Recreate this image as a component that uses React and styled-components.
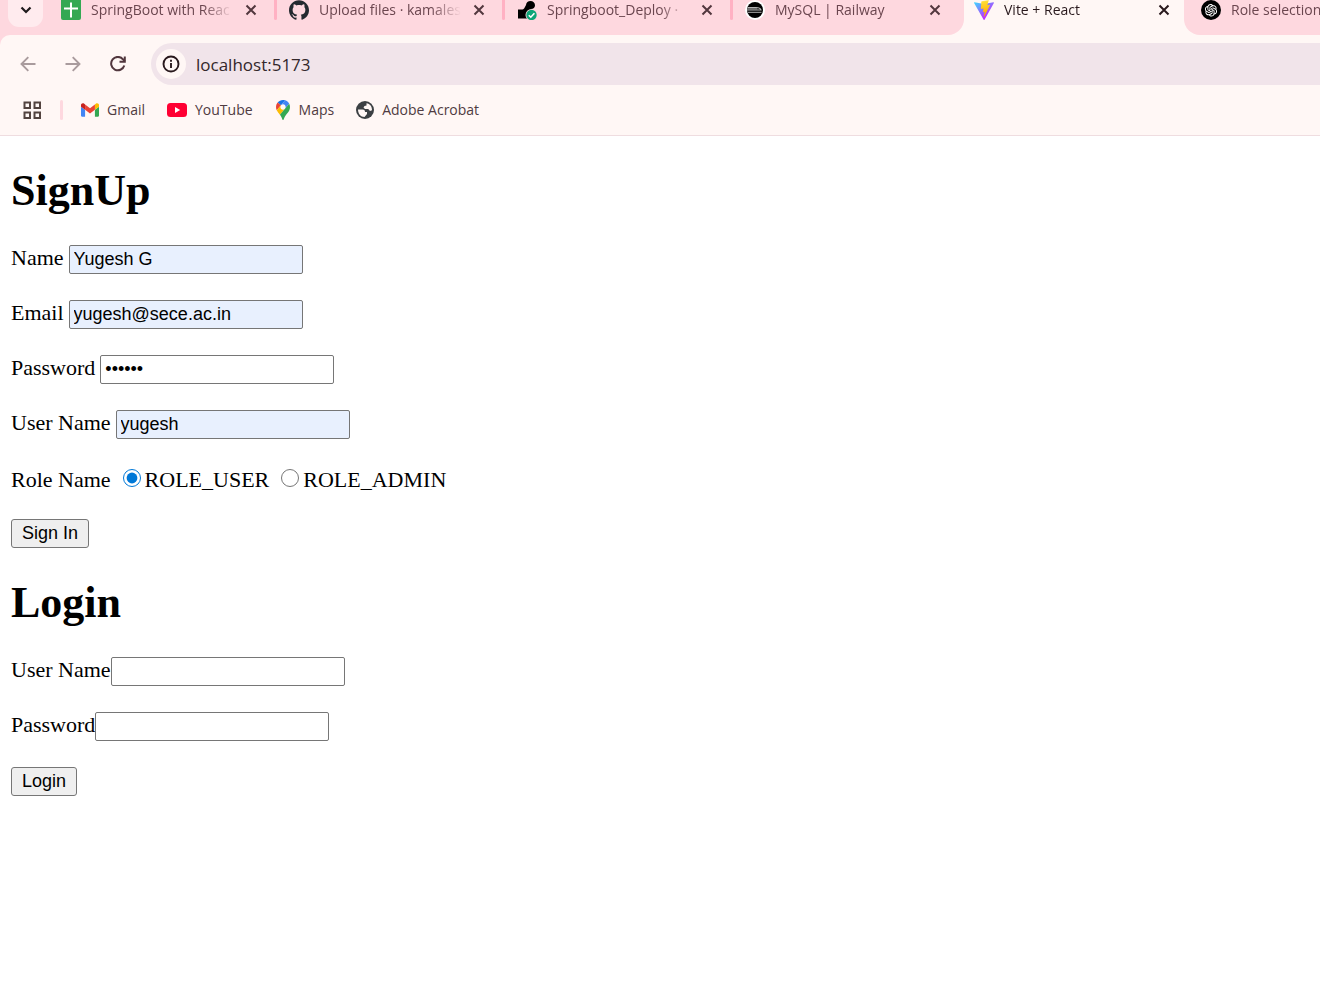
import React, { useState } from "react";
import styled, { createGlobalStyle } from "styled-components";
import { SiGithub } from "react-icons/si";
import { AiOutlineOpenAI } from "react-icons/ai";

const GlobalStyle = createGlobalStyle`
  * { box-sizing: border-box; }
  body { margin: 0; background: #fff; color: #000; }
  button, input { font: inherit; color: inherit; }
`;

const Browser = styled.header`
  font-family: "Open Sans", "Noto Sans", sans-serif;
  font-size: 14px;
  line-height: 20px;
  background: #fed8df;
  overflow: hidden;
`;

const TabStrip = styled.div`
  display: flex;
  height: 35px;
  background: #fff7f5;
`;

const TabGroup = styled.div`
  display: flex;
  flex: ${(p) => (p.$fill ? "1 1 0" : "none")};
  min-width: 0;
  overflow: hidden;
  padding: ${(p) => (p.$fill ? "0 0 0 7px" : "0 1px 0 8px")};
  background: #fed8df;
  border-radius: ${(p) => (p.$fill ? "0 0 0 16px" : "0 0 16px 0")};
`;

const TabSearch = styled.button`
  display: flex;
  align-items: center;
  justify-content: center;
  width: 35px;
  height: 27px;
  margin-right: 8px;
  padding: 0 0 7px;
  border: 0;
  border-radius: 0 0 11px 11px;
  background: #ffebee;
  color: #1f1a1c;
`;

const Tab = styled.div`
  display: flex;
  flex: none;
  height: 20px;
  width: ${(p) => (p.$active ? 220 : 228)}px;
  padding-left: 10px;
  color: ${(p) => (p.$active ? "#29191d" : "#6b464f")};
`;

const Favicon = styled.span`
  display: flex;
  flex: none;
  align-items: center;
  justify-content: center;
  width: 20px;
  height: 20px;
  border-radius: 10px;
  background: ${(p) => p.$fill || "none"};
  color: ${(p) => p.$ink || "inherit"};
`;

const TabTitle = styled.span`
  width: 142px;
  margin-left: 10px;
  overflow: hidden;
  white-space: nowrap;
  mask-image: linear-gradient(to right, #000 112px, transparent 142px);
`;

const CloseButton = styled.button`
  display: flex;
  align-items: center;
  justify-content: center;
  width: 16px;
  height: 20px;
  margin-left: 10px;
  padding: 0;
  border: 0;
  background: none;
  color: ${(p) => (p.$active ? "#29191d" : "#52373e")};
`;

const TabDivider = styled.span`
  width: 3px;
  height: 20px;
  margin-left: 15px;
  border-radius: 0 0 2px 2px;
  background: #ffb1c3;
`;

const Toolbar = styled.div`
  display: flex;
  align-items: center;
  padding: 8px 0 0 16px;
  background: #fff7f5;
  border-radius: 10px 0 0 0;
`;

const NavButton = styled.button`
  display: flex;
  align-items: center;
  justify-content: center;
  width: 24px;
  height: 24px;
  margin-right: 21px;
  padding: 0;
  border: 0;
  background: none;
  color: ${(p) => (p.disabled ? "#a99b9d" : "#52373e")};
`;

const AddressBar = styled.div`
  display: flex;
  flex: 1;
  align-items: center;
  height: 42px;
  padding-left: 5px;
  border-radius: 21px 0 0 21px;
  background: #f1e4ea;
`;

const SiteInfo = styled.button`
  display: flex;
  align-items: center;
  justify-content: center;
  width: 30px;
  height: 30px;
  padding: 0;
  border: 0;
  border-radius: 15px;
  background: #fff7f5;
  color: #29191d;
`;

const AddressInput = styled.input`
  flex: 1;
  min-width: 0;
  height: 30px;
  margin-left: 10px;
  padding: 0;
  border: 0;
  outline: none;
  background: none;
  color: #33272b;
  font-size: 17px;
`;

const Bookmarks = styled.nav`
  display: flex;
  align-items: center;
  height: 51px;
  padding-left: 22px;
  background: #fff7f5;
  border-bottom: 1px solid #efdde0;
`;

const AppsButton = styled.button`
  display: flex;
  width: 20px;
  height: 20px;
  padding: 0;
  border: 0;
  background: none;
  color: #52433f;
`;

const BookmarkDivider = styled.span`
  width: 3px;
  height: 20px;
  margin: 0 18px;
  border-radius: 2px;
  background: #fed8df;
`;

const Bookmark = styled.a`
  display: flex;
  align-items: center;
  gap: 8px;
  margin-right: 22px;
  color: #4f3b41;
  text-decoration: none;
  white-space: nowrap;
`;

const Page = styled.main`
  padding: 30px 11px;
  font-family: "Liberation Serif", "Times New Roman", serif;
  font-size: 22px;
  line-height: 25px;
`;

const Title = styled.h1`
  margin: 0 0 29px;
  font-size: 44px;
  line-height: 50px;
`;

const Form = styled.form`
  display: flex;
  flex-direction: column;
  align-items: flex-start;
  gap: 26px;
  margin-bottom: 30px;
`;

const Field = styled.div`
  display: flex;
  align-items: baseline;
  gap: ${(p) => (p.$tight ? 0 : 5)}px;
  height: 29px;
`;

const TextInput = styled.input`
  width: 234px;
  height: 29px;
  padding: 0 4px;
  border: 1px solid #767676;
  border-radius: 2px;
  background: ${(p) => (p.$filled ? "#e8f0fe" : "#fff")};
  font-family: "Liberation Sans", Arial, sans-serif;
  font-size: 18px;
`;

const RoleGroup = styled.div`
  display: flex;
  align-items: center;
  gap: 12px;
  height: 28px;
`;

const RoleOption = styled.label`
  display: flex;
  align-items: center;
  gap: 4px;
`;

const Radio = styled.input`
  width: 18px;
  height: 18px;
  margin: 0 0 2px;
  accent-color: #0078d7;
`;

const SubmitButton = styled.button`
  height: 29px;
  padding: 0 10px;
  border: 1px solid #767676;
  border-radius: 3px;
  background: #efefef;
  font-family: "Liberation Sans", Arial, sans-serif;
  font-size: 18px;
`;

const SheetIcon = () => (
  <svg width="20" height="20" viewBox="0 0 20 20">
    <path d="M0 0h20v18a2 2 0 0 1-2 2H2a2 2 0 0 1-2-2z" fill="#34a853" />
    <path d="M9 2.500h2v5h6v2h-6v8H9v-8H3v-2h6z" fill="#fff" />
  </svg>
);

const DeployIcon = () => (
  <svg width="20" height="20" viewBox="0 0 20 20">
    <path d="M1 9.500h3.500c3 0 3-2 4.500-4.500C9.300 2.500 11 1 13.500 1S18 3 18 5.200 16.500 9 14 9v9.500H1z" fill="#000" />
    <circle cx="14.500" cy="15" r="6" fill="#fed8df" />
    <circle cx="14.500" cy="15" r="5.200" fill="#0ca678" />
    <path d="m11.800 15.200 2 2 3.600-4" fill="none" stroke="#fff" strokeWidth="1.600" />
  </svg>
);

const RailwayIcon = () => (
  <svg width="20" height="20" viewBox="0 0 20 20">
    <circle cx="10" cy="10" r="8" fill="#000" />
    <path d="M2.500 7.500H11c3 0 4.500 1 5 2.500H2" fill="none" stroke="#b5b5b5" strokeWidth="1.100" />
    <path d="M2.300 8.800h10M3 12.300h13.500" stroke="#8c8c8c" strokeWidth="1.300" />
  </svg>
);

const GlobeIcon = () => (
  <svg width="18" height="18" viewBox="0 0 18 18">
    <circle cx="9" cy="9" r="9" fill="#3c4043" />
    <path d="M2 8.500h4.500c2 0 2.500 1 2.500 2.500h2v2l-2.500 3C4.500 16 2 12.500 2 8.500z" fill="#fff7f5" />
    <path d="M10.500 2.200c3.500.500 5.700 3.300 5.500 7l-2 .800-1.800-2H9L7.500 6.500 8.500 5l2-.500z" fill="#fff7f5" />
  </svg>
);

const ViteIcon = () => (
  <svg width="20" height="20" viewBox="0 0 256 257">
    <defs>
      <linearGradient id="viteBody" x1="-.8%" x2="57.6%" y1="7.7%" y2="78.400%">
        <stop offset="0%" stopColor="#41d1ff" />
        <stop offset="100%" stopColor="#bd34fe" />
      </linearGradient>
      <linearGradient id="viteBolt" x1="43.400%" x2="50.300%" y1="2.200%" y2="89%">
        <stop offset="0%" stopColor="#ffea83" />
        <stop offset="8.300%" stopColor="#ffdd35" />
        <stop offset="100%" stopColor="#ffa800" />
      </linearGradient>
    </defs>
    <path fill="url(#viteBody)" d="M255.153 37.938 134.897 252.976c-2.483 4.440-8.862 4.466-11.382.048L.875 37.958c-2.746-4.814 1.371-10.646 6.827-9.670l120.385 21.517a6.537 6.537 0 0 0 2.322-.004l117.867-21.483c5.438-.991 9.574 4.796 6.877 9.620z" />
    <path fill="url(#viteBolt)" d="M185.432.063 96.440 17.501a3.268 3.268 0 0 0-2.634 3.014l-5.474 92.456a3.268 3.268 0 0 0 3.997 3.378l24.777-5.718c2.318-.535 4.413 1.507 3.936 3.838l-7.361 36.047c-.495 2.426 1.782 4.500 4.151 3.780l15.304-4.649c2.372-.720 4.652 1.360 4.150 3.788l-11.698 56.621c-.732 3.542 3.979 5.473 5.943 2.437l1.313-2.028 72.516-144.720c1.215-2.423-.880-5.186-3.540-4.672l-25.505 4.922c-2.396.462-4.435-1.770-3.759-4.114l16.646-57.705c.677-2.350-1.370-4.583-3.769-4.113z" />
  </svg>
);

const ChevronIcon = () => (
  <svg width="12" height="8" viewBox="0 0 12 8">
    <path d="m1.500 1.500 4.500 4.500 4.500-4.500" fill="none" stroke="currentColor" strokeWidth="2.200" />
  </svg>
);

const CloseIcon = () => (
  <svg width="12" height="12" viewBox="0 0 12 12">
    <path d="m1.500 1.500 9 9m0-9-9 9" stroke="currentColor" strokeWidth="2" />
  </svg>
);

const ArrowIcon = ({ forward }) => (
  <svg width="16" height="16" viewBox="0 0 16 16" fill="none" stroke="currentColor" strokeWidth="1.900">
    <path d={forward ? "M.500 8H14.500M7.700 1.200 14.500 8l-6.800 6.800" : "M15.500 8H1.500M8.300 1.200 1.500 8l6.800 6.800"} />
  </svg>
);

const ReloadIcon = () => (
  <svg width="16" height="16" viewBox="0 0 16 16" fill="none" stroke="currentColor" strokeWidth="2">
    <path d="M14.300 9.500A6.700 6.700 0 1 1 13 3.300L14.800 5.200" />
    <path d="M14.800.500v5.200H9.500" />
  </svg>
);

const InfoIcon = () => (
  <svg width="18" height="18" viewBox="0 0 18 18">
    <circle cx="9" cy="9" r="7.500" fill="none" stroke="currentColor" strokeWidth="1.900" />
    <path d="M9 8v5M9 4.800v2" stroke="currentColor" strokeWidth="1.900" />
  </svg>
);

const AppsIcon = () => (
  <svg width="20" height="20" viewBox="0 0 20 20" fill="none" stroke="currentColor" strokeWidth="2">
    <path d="M2.500 2.500h5.500v5.500H2.500zM12.500 2.500H18v5.500h-5.500zM2.500 12.500h5.500V18H2.500zM12.500 12.500H18V18h-5.500z" />
  </svg>
);

const GmailIcon = () => (
  <svg width="18" height="14" viewBox="52 42 88 66">
    <path fill="#4285f4" d="M58 108h14V74L52 59v43c0 3.320 2.690 6 6 6" />
    <path fill="#34a853" d="M120 108h14c3.320 0 6-2.690 6-6V59l-20 15" />
    <path fill="#fbbc04" d="M120 48v26l20-15v-8c0-7.420-8.470-11.650-14.400-7.200" />
    <path fill="#ea4335" d="M72 74V48l24 18 24-18v26L96 92" />
    <path fill="#c5221f" d="M52 51v8l20 15V48l-5.600-4.200c-5.940-4.450-14.400-.220-14.400 7.200" />
  </svg>
);

const YouTubeIcon = () => (
  <svg width="20" height="14" viewBox="0 0 20 14">
    <rect width="20" height="14" rx="3.500" fill="#ff0033" />
    <path d="M8 4v6l5.200-3z" fill="#fff" />
  </svg>
);

const MapsIcon = () => (
  <svg width="16" height="20" viewBox="0 0 92.300 132.300">
    <path fill="#1a73e8" d="M60.200 2.200C55.800.800 51 0 46.100 0 32 0 19.300 6.400 10.800 16.500l21.800 18.300z" />
    <path fill="#ea4335" d="M10.800 16.500C4.100 24.500 0 34.900 0 46.100c0 8.700 1.700 15.700 4.600 22l28-33.300z" />
    <path fill="#4285f4" d="M46.200 28.500c9.800 0 17.700 7.900 17.700 17.700 0 4.300-1.600 8.300-4.200 11.400 0 0 13.900-16.600 27.500-32.700-5.600-10.800-15.300-19-27-22.700L32.600 34.800c3.300-3.800 8.100-6.300 13.600-6.300" />
    <path fill="#fbbc04" d="M46.200 63.800c-9.800 0-17.700-7.900-17.700-17.700 0-4.300 1.500-8.300 4.100-11.300l-28 33.300c4.800 10.600 12.800 19.200 21 29.900l34.100-40.500c-3.300 3.900-8.100 6.300-13.500 6.300" />
    <path fill="#34a853" d="M59.100 109.200c15.400-24.100 33.300-35 33.300-63 0-7.700-1.900-14.900-5.200-21.300L25.600 98c2.600 3.400 5.300 7.300 7.900 11.300 9.400 14.500 6.800 23.100 12.800 23.100s3.400-8.700 12.800-23.200" />
  </svg>
);

const backgroundTabs = [
  { title: "SpringBoot with Reac", icon: <SheetIcon /> },
  { title: "Upload files · kamales", icon: <SiGithub size={20} />, ink: "#24292f" },
  { title: "Springboot_Deploy ·", icon: <DeployIcon /> },
  { title: "MySQL | Railway", icon: <RailwayIcon />, fill: "#fff", last: true },
];

const bookmarks = [
  { name: "Gmail", icon: <GmailIcon /> },
  { name: "YouTube", icon: <YouTubeIcon /> },
  { name: "Maps", icon: <MapsIcon /> },
  { name: "Adobe Acrobat", icon: <GlobeIcon /> },
];

function BrowserTab({ title, icon, fill, ink, active, last, open }) {
  return (
    <Tab $active={active}>
      <Favicon $fill={fill} $ink={ink}>{icon}</Favicon>
      <TabTitle>{title}</TabTitle>
      {!open && (
        <CloseButton $active={active} aria-label={`Close ${title}`}>
          <CloseIcon />
        </CloseButton>
      )}
      {!active && !last && <TabDivider />}
    </Tab>
  );
}

function TextField({ id, label, tight, ...input }) {
  return (
    <Field $tight={tight}>
      <label htmlFor={id}>{label}</label>
      <TextInput id={id} {...input} />
    </Field>
  );
}

export default function App() {
  const [role, setRole] = useState("ROLE_USER");
  const stop = (e) => e.preventDefault();

  return (
    <>
      <GlobalStyle />
      <Browser>
        <TabStrip>
          <TabGroup>
            <TabSearch aria-label="Search tabs"><ChevronIcon /></TabSearch>
            {backgroundTabs.map((t) => <BrowserTab key={t.title} {...t} />)}
          </TabGroup>
          <BrowserTab title="Vite + React" icon={<ViteIcon />} active />
          <TabGroup $fill>
            <BrowserTab title="Role selection" icon={<AiOutlineOpenAI size={16} />} fill="#000" ink="#fff" last open />
          </TabGroup>
        </TabStrip>
        <Toolbar>
          <NavButton disabled aria-label="Back"><ArrowIcon /></NavButton>
          <NavButton disabled aria-label="Forward"><ArrowIcon forward /></NavButton>
          <NavButton aria-label="Reload"><ReloadIcon /></NavButton>
          <AddressBar>
            <SiteInfo aria-label="Site information"><InfoIcon /></SiteInfo>
            <AddressInput aria-label="Address" defaultValue="localhost:5173" />
          </AddressBar>
        </Toolbar>
        <Bookmarks>
          <AppsButton aria-label="Apps"><AppsIcon /></AppsButton>
          <BookmarkDivider />
          {bookmarks.map((b) => (
            <Bookmark key={b.name} href="#">{b.icon}{b.name}</Bookmark>
          ))}
        </Bookmarks>
      </Browser>

      <Page>
        <Title>SignUp</Title>
        <Form onSubmit={stop}>
          <TextField id="name" label="Name" defaultValue="Yugesh G" $filled />
          <TextField id="email" label="Email" defaultValue="yugesh@sece.ac.in" $filled />
          <TextField id="password" label="Password" type="password" defaultValue="yugesh" />
          <TextField id="username" label="User Name" defaultValue="yugesh" $filled />
          <RoleGroup role="radiogroup" aria-labelledby="role-name">
            <span id="role-name">Role Name</span>
            {["ROLE_USER", "ROLE_ADMIN"].map((name) => (
              <RoleOption key={name}>
                <Radio type="radio" name="role" checked={role === name} onChange={() => setRole(name)} />
                {name}
              </RoleOption>
            ))}
          </RoleGroup>
          <SubmitButton>Sign In</SubmitButton>
        </Form>
        <Title>Login</Title>
        <Form onSubmit={stop}>
          <TextField id="login-username" label="User Name" tight />
          <TextField id="login-password" label="Password" type="password" tight />
          <SubmitButton>Login</SubmitButton>
        </Form>
      </Page>
    </>
  );
}
